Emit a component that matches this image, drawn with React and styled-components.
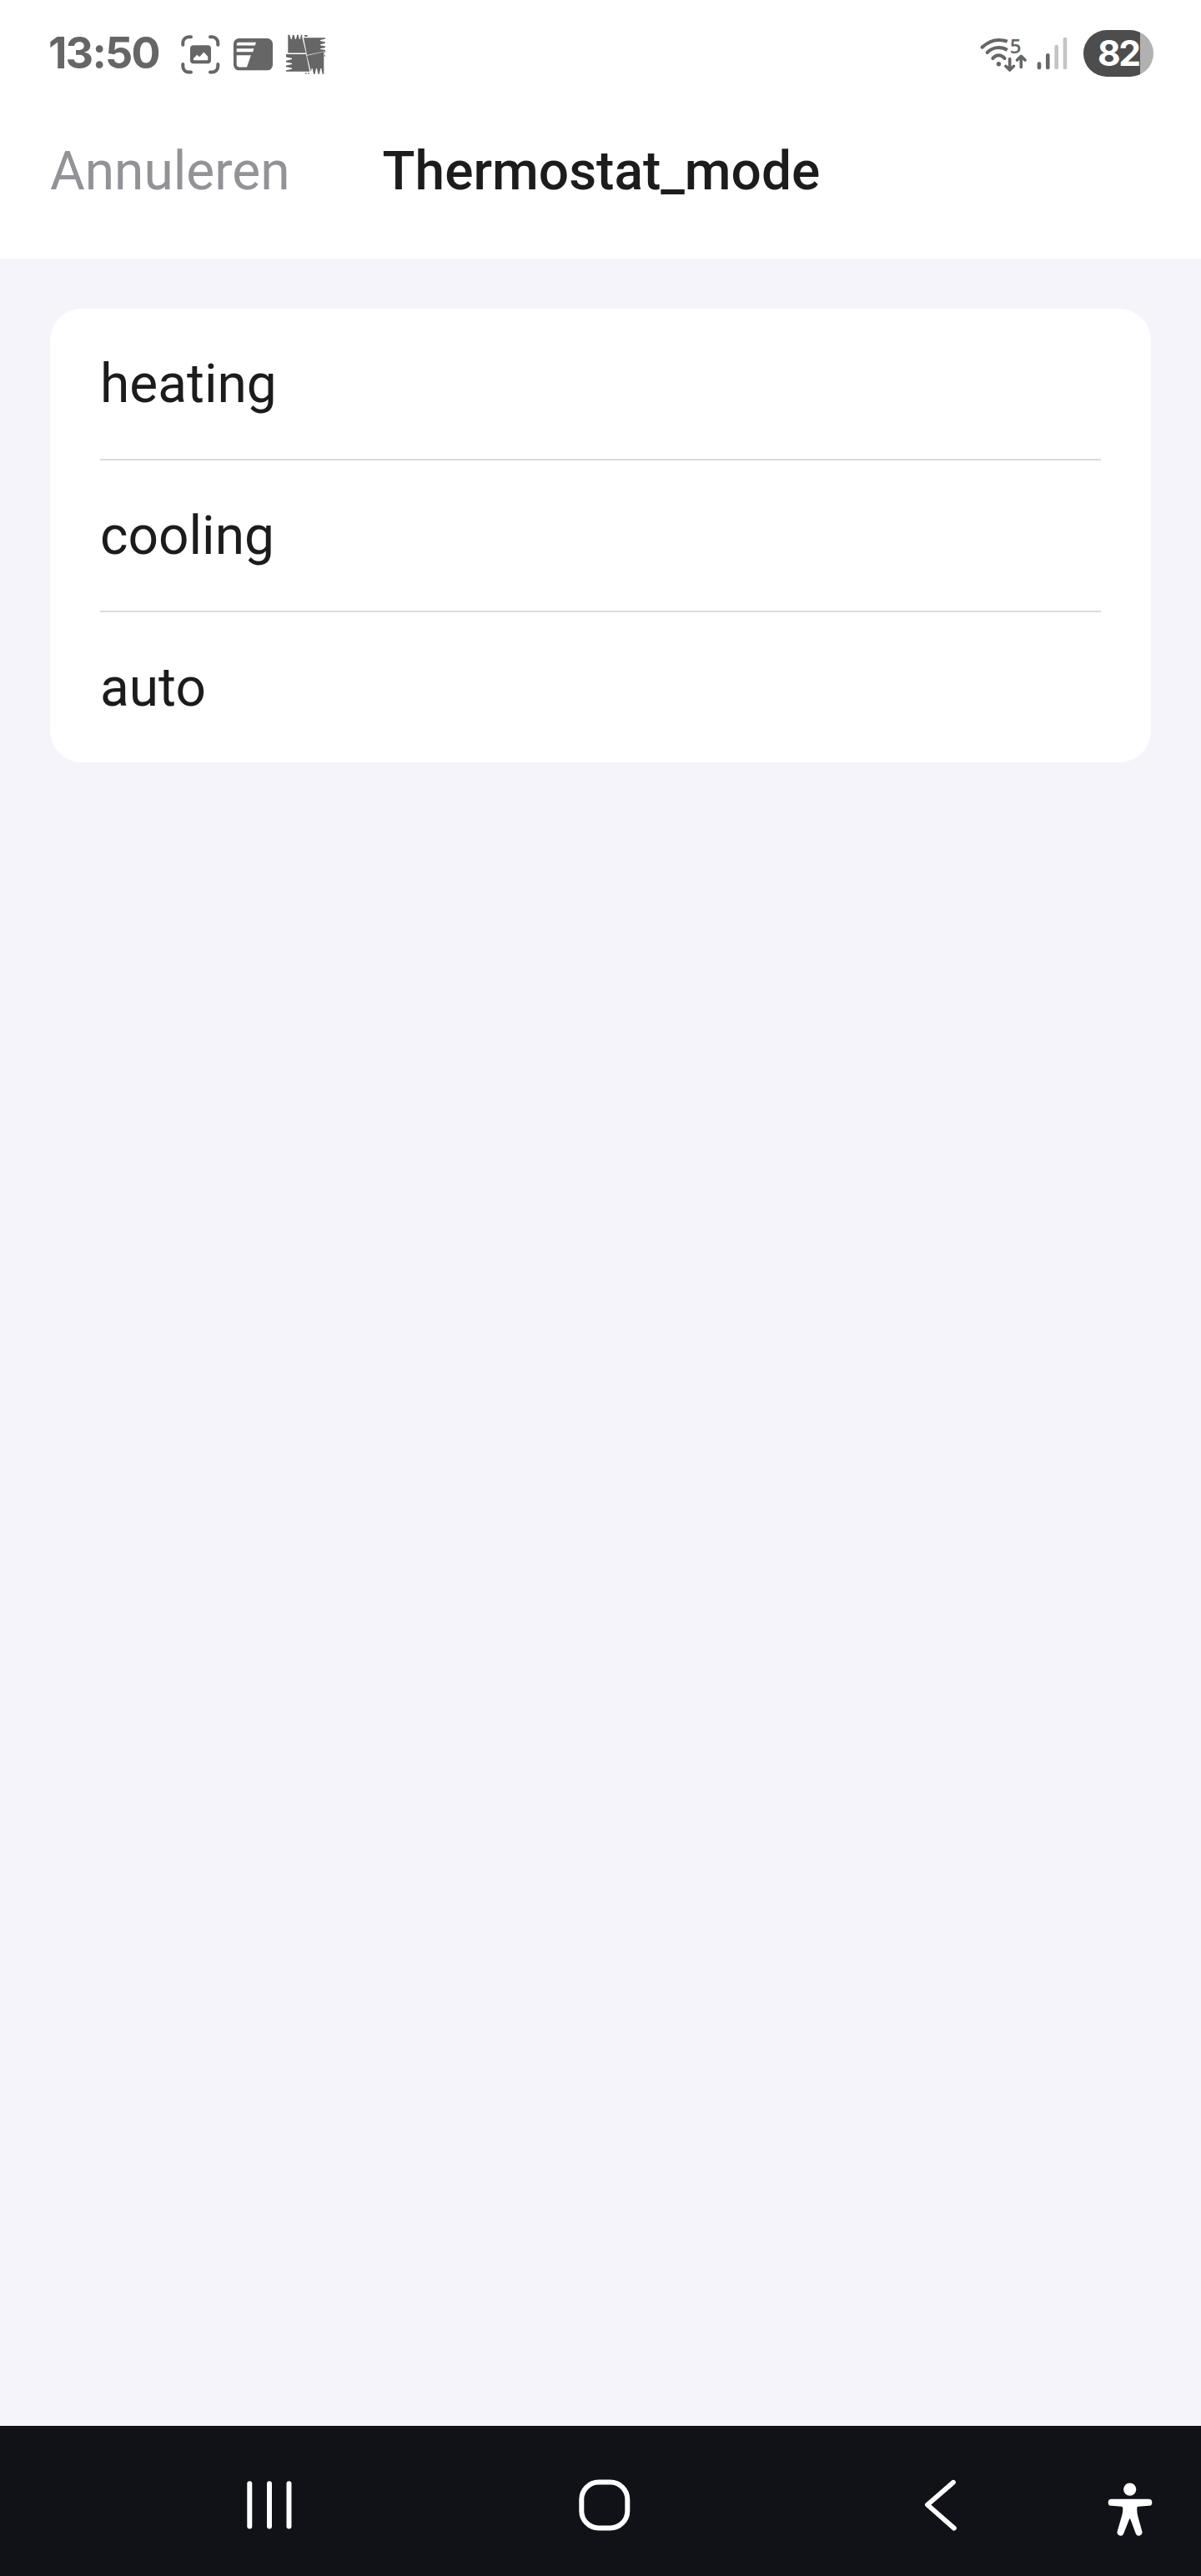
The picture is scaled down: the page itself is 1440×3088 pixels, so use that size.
import React from "react";
import styled, { createGlobalStyle } from "styled-components";

const GlobalStyle = createGlobalStyle`
  body {
    margin: 0;
    background: #f5f4fa;
  }
  * {
    box-sizing: border-box;
  }
`;

const Screen = styled.div`
  display: flex;
  flex-direction: column;
  width: 1440px;
  height: 3088px;
  font-family: Roboto, sans-serif;
  color: #1c1c1c;
  background: #f5f4fa;
`;

const StatusBar = styled.div`
  display: flex;
  align-items: center;
  justify-content: space-between;
  height: 128px;
  padding: 0 57px 0 58px;
  background: #fff;
`;

const StatusGroup = styled.div`
  display: flex;
  align-items: center;
  gap: ${(props) => props.$gap}px;
`;

const Clock = styled.span`
  width: 143px;
  font-family: Inter, sans-serif;
  font-size: 52px;
  font-weight: 700;
  letter-spacing: -1.8px;
  line-height: 60px;
  white-space: nowrap;
  color: #666;
`;

const StatusIcon = styled.svg`
  display: block;
  flex: none;
  height: 48px;
  margin-top: 2px;
  overflow: visible;
  color: #666;
`;

const Battery = styled.div`
  width: 84px;
  height: 56px;
  margin-left: 7px;
  padding-left: 17px;
  border-radius: 28px;
  background: linear-gradient(to right, #4d4d4d 68px, #b1b1b1 68px);
  font-family: Inter, sans-serif;
  font-size: 42.5px;
  font-weight: 700;
  letter-spacing: -2.5px;
  line-height: 56px;
  color: #fff;
`;

const Header = styled.header`
  display: flex;
  align-items: center;
  gap: 111px;
  height: 182px;
  padding: 0 60px 27px;
  background: #fff;
  font-size: 64px;
  line-height: 75px;
`;

const CancelButton = styled.button`
  border: none;
  padding: 0;
  background: none;
  font: inherit;
  color: #929297;
`;

const Title = styled.h1`
  margin: 0;
  font-size: 64px;
  font-weight: 500;
`;

const Content = styled.main`
  flex: 1;
  padding: 60px;
`;

const OptionList = styled.ul`
  margin: 0;
  padding: 0 60px;
  list-style: none;
  border-radius: 38px;
  background: #fff;
`;

const Option = styled.li`
  display: flex;
  align-items: center;
  box-sizing: content-box;
  height: 179px;
  padding-top: 1px;
  font-size: 64px;
  line-height: 75px;

  & + & {
    border-top: 2px solid #dbdae0;
  }
`;

const NavBar = styled.nav`
  display: flex;
  align-items: center;
  height: 180px;
  padding: 9px 0 0 121.5px;
  background: #111217;
`;

const NavButton = styled.button`
  display: flex;
  flex: none;
  justify-content: center;
  width: ${(props) => props.$width || 402}px;
  margin-top: ${(props) => props.$drop || 0}px;
  border: none;
  padding: 0;
  background: none;
  color: #fff;

  svg {
    flex: none;
  }
`;

const ScreenshotIcon = () => (
  <StatusIcon width="48" viewBox="0 0 48 48" fill="none">
    <path
      d="M3.3 12.7V10.3a7 7 0 0 1 7-7H13M36 3.3h2.3a7 7 0 0 1 7 7v2.4M45.3 36v2.6a7 7 0 0 1-7 7H36M13 45.6h-2.7a7 7 0 0 1-7-7V36"
      stroke="currentColor"
      strokeWidth="4"
      strokeLinecap="round"
    />
    <rect x="12" y="13.3" width="25" height="22" rx="4" fill="currentColor" />
    <path
      d="M16 31.3V29l4.2-4.3 3.1 2.6 5-5.8 4.9 5.2v4.6z"
      fill="#fff"
    />
  </StatusIcon>
);

const NewsIcon = () => (
  <StatusIcon width="48" viewBox="0 0 48 48">
    <rect x="1" y="5" width="47" height="38.3" rx="6.5" fill="currentColor" />
    <path
      d="M7.5 9.7H28l-1.2 3.8H4.7v-1.3a2.5 2.5 0 0 1 2.8-2.5zM4.7 17.3h20.8l-1.3 4H4.7zM4.7 25.2h17.2L17 39.4H8a3.3 3.3 0 0 1-3.3-3.3z"
      fill="#fff"
    />
  </StatusIcon>
);

const PatchIcon = () => (
  <StatusIcon width="48" viewBox="0 0 48 48" fill="currentColor">
    <path d="M3.3 22.4V.8h2L6.8 6h1L9 .8h1.4L12 6h1L14.2.8h1.4L17 6h.8L19 .8h1.3v3L24.8 22.4z" />
    <path d="M22 4.2h26v1.3l-6 1.6v1l6 1.3v1.4l-6 1.4v1l6 1.4v1.3l-6 1.3v.8l6 1v1.3l-22 4.8z" />
    <path d="M1 24h24l4.3 20.8H1v-1.5l7-1.6v-1.2l-7-1.3v-1.6L8 36v-1.3l-7-1.3v-1.7L8 30v-1.2l-7-1.4z" />
    <path d="M26 25.8l20.3-4.9v26.8h-1.6L43.2 41h-1l-1.3 6.7h-1.5L38 41h-1l-1.4 6.7H34L32.7 41h-.9l-1 4z" />
    <path d="M22.8 1h3.7v2h-2.8zM46.8 20.2h1.2v1.6h-1.2zM46.8 24.8h1v2h-1zM23.8 46.3h1.7v1.5h-1.7zM27.3 46.3h1.5v1.5h-1.5z" />
  </StatusIcon>
);

const WifiIcon = () => (
  <StatusIcon width="58" viewBox="0 0 58 48" fill="none">
    <g
      stroke="currentColor"
      strokeWidth="4"
      strokeLinecap="round"
      strokeLinejoin="round"
    >
      <path
        d="M3.5 15.7C10.5 9.5 17 7 23.4 7c4 0 7.5.5 10.4 1.7"
        strokeLinecap="butt"
      />
      <path d="M3.5 15.7l.8-.7M9.7 22c4-4 8.6-6 13.7-6" />
      <path d="M23.4 16c3.9 0 7.3 1 10.3 3" strokeLinecap="butt" />
      <path d="M16.3 29c4-5 10.3-5 14.3 0" />
      <path d="M36.7 29.5v13.3M31.9 38.3l4.8 4.7 4.8-4.7" strokeWidth="3.6" />
      <path d="M50.3 39.5V26.5M45.5 31l4.8-4.7 4.8 4.7" strokeWidth="3.6" />
    </g>
    <circle cx="23.4" cy="35.7" r="2.7" fill="currentColor" />
    <text
      x="36.7"
      y="23"
      fill="currentColor"
      fontFamily="Open Sans, sans-serif"
      fontSize="24"
      fontWeight="600"
    >
      5
    </text>
  </StatusIcon>
);

const SignalIcon = () => (
  <StatusIcon width="40" viewBox="0 0 40 48" fill="currentColor">
    <rect x="1.7" y="33.3" width="4.6" height="9" rx="2.3" />
    <rect x="12" y="23" width="4.6" height="19.3" rx="2.3" />
    <rect x="22.4" y="12.7" width="4.6" height="29.6" rx="2.3" fill="#c4c4c4" />
    <rect x="32.7" y="3.7" width="4.6" height="38.6" rx="2.3" fill="#c4c4c4" />
  </StatusIcon>
);

const RecentsIcon = () => (
  <svg width="60" height="64" viewBox="0 0 60 64" fill="currentColor">
    <rect x="3.3" y="3.2" width="6" height="57.3" rx="3" />
    <rect x="27" y="3.2" width="6" height="57.3" rx="3" />
    <rect x="50.5" y="3.2" width="6" height="57.3" rx="3" />
  </svg>
);

const HomeIcon = () => (
  <svg width="64" height="64" viewBox="0 0 64 64" fill="none">
    <rect
      x="4.3"
      y="4.5"
      width="55"
      height="55"
      rx="20.5"
      stroke="currentColor"
      strokeWidth="6"
    />
  </svg>
);

const BackIcon = () => (
  <svg width="64" height="64" viewBox="0 0 64 64" fill="none">
    <path
      d="M48 4.7L17 31.6 49 59.7"
      stroke="currentColor"
      strokeWidth="5.8"
      strokeLinecap="round"
      strokeLinejoin="round"
    />
  </svg>
);

const AccessibilityIcon = () => (
  <svg width="64" height="64" viewBox="0 0 64 64" fill="currentColor">
    <circle cx="31.7" cy="8.2" r="7.6" />
    <path d="M9.8 19.8H54.2a4 4 0 0 1 .2 8L41.6 28.8Q40.4 29 40.3 30.2Q40 35 41.2 40L46.4 58.8A4 4 0 0 1 38.8 61.2L32.4 43.9Q31.7 42.8 31 43.9L24.2 61.2A4 4 0 0 1 16.6 58.8L22.6 38Q23.4 34.5 23.2 30.2Q23 29 21.8 28.8L9.6 27.8A4 4 0 0 1 9.8 19.8z" />
  </svg>
);

const options = ["heating", "cooling", "auto"];

const App = () => (
  <>
    <GlobalStyle />
    <Screen>
      <StatusBar>
        <StatusGroup $gap={15}>
          <Clock>13:50</Clock>
          <ScreenshotIcon />
          <NewsIcon />
          <PatchIcon />
        </StatusGroup>
        <StatusGroup $gap={10}>
          <WifiIcon />
          <SignalIcon />
          <Battery>82</Battery>
        </StatusGroup>
      </StatusBar>
      <Header>
        <CancelButton>Annuleren</CancelButton>
        <Title>Thermostat_mode</Title>
      </Header>
      <Content>
        <OptionList>
          {options.map((option) => (
            <Option key={option}>{option}</Option>
          ))}
        </OptionList>
      </Content>
      <NavBar>
        <NavButton>
          <RecentsIcon />
        </NavButton>
        <NavButton>
          <HomeIcon />
        </NavButton>
        <NavButton>
          <BackIcon />
        </NavButton>
        <NavButton $width={54} $drop={10}>
          <AccessibilityIcon />
        </NavButton>
      </NavBar>
    </Screen>
  </>
);

export default App;
